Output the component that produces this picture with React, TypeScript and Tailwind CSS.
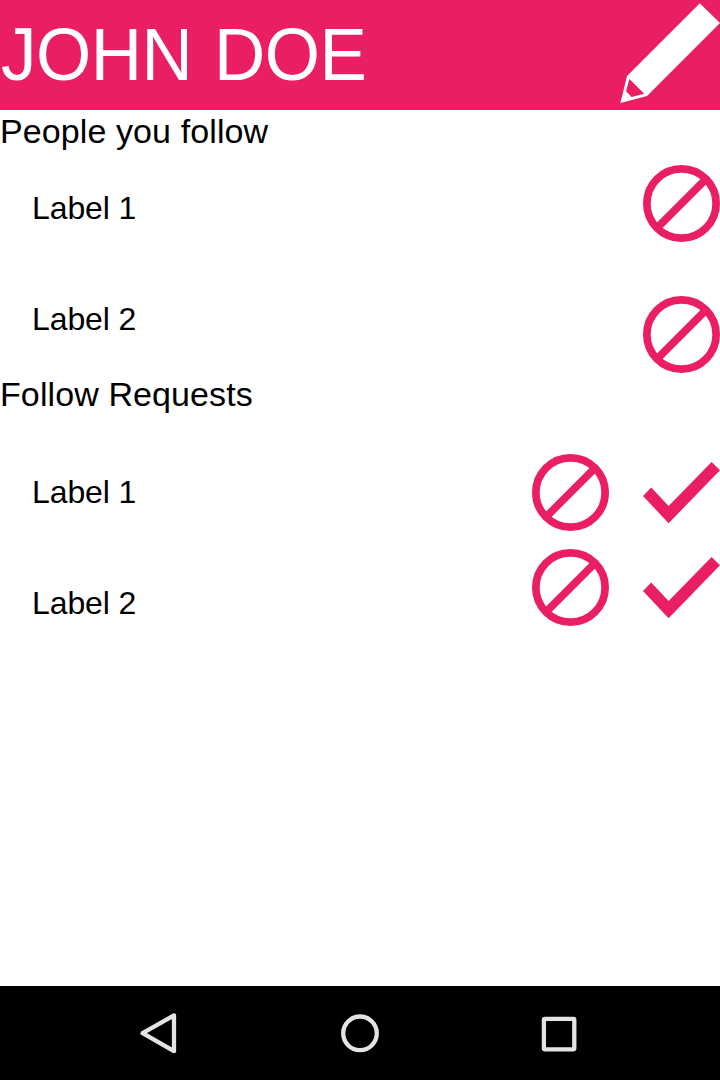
import React from "react";

function Pencil() {
  return (
    <svg viewBox="0 0 100 110" className="h-[110px] w-[100px] shrink-0" fill="white" fillRule="evenodd">
      <path d="M79.8 3.2 100 22.9 27 96 .4 102.9 7 76ZM9.4 79 6 91.3 11.6 97 24.3 93.7Z" />
    </svg>
  );
}

function Block() {
  return (
    <svg viewBox="0 0 77 77" className="h-[77px] w-[77px] shrink-0" fill="none" stroke="#ea1e63" strokeWidth="7.7">
      <circle cx="38.5" cy="38.5" r="34.65" />
      <path d="M14.5 62.5 62.5 14.5" />
    </svg>
  );
}

function Check() {
  return (
    <svg viewBox="0 0 77 77" className="h-[77px] w-[77px] shrink-0" fill="#ea1e63">
      <path d="M0 42 8.2 33.6 25.6 52 68.6 8 77 16.3 25.6 69.2Z" />
    </svg>
  );
}

function Heading({ children }: { children: string }) {
  return (
    <h2 className="h-11 whitespace-nowrap text-[34px] leading-[43px] tracking-[0.1px]">{children}</h2>
  );
}

function Labels({ className }: { className: string }) {
  return (
    <ul className={className}>
      {["Label 1", "Label 2"].map((label) => (
        <li key={label} className="h-[111px] text-[32px] leading-[112px] tracking-[-0.1px]">
          {label}
        </li>
      ))}
    </ul>
  );
}

export default function App() {
  return (
    <div className="flex h-[1080px] w-[720px] flex-col overflow-hidden bg-white font-['Liberation_Sans',Arial,sans-serif] text-black">
      <header className="flex h-[110px] shrink-0 items-center justify-between bg-[#ea1e63]">
        <h1 className="scale-y-[1.05] whitespace-nowrap pl-px text-[71px] leading-[106px] text-white [word-spacing:2.5px] tracking-[-0.5px]">JOHN DOE</h1>
        <Pencil />
      </header>

      <main className="flex-1">
        <section className="h-[263px]">
          <Heading>People you follow</Heading>
          <div className="flex items-start justify-between">
            <Labels className="-mt-0.5 pl-8" />
            <div className="flex flex-col gap-[54px] pt-[11px]">
              <Block />
              <Block />
            </div>
          </div>
        </section>
        <section>
          <Heading>Follow Requests</Heading>
          <div className="flex items-start justify-between">
            <Labels className="pl-8 pt-[19px]" />
            <div className="grid grid-cols-2 gap-x-[34px] gap-y-[18px] pt-[37px]">
              <Block />
              <Check />
              <Block />
              <Check />
            </div>
          </div>
        </section>
      </main>

      <nav className="flex h-[94px] shrink-0 items-center justify-between bg-black px-[137px]">
        <svg viewBox="0 0 44 44" className="h-11 w-11" fill="none" stroke="#e4e4e4" strokeWidth="4.3" strokeLinejoin="round">
          <path d="M5.6 22.2 37 4.4V40.2Z" />
        </svg>
        <svg viewBox="0 0 44 44" className="h-11 w-11" fill="none" stroke="#e4e4e4" strokeWidth="4.3">
          <circle cx="22" cy="22.3" r="16.8" />
        </svg>
        <svg viewBox="0 0 44 44" className="h-11 w-11" fill="none" stroke="#e4e4e4" strokeWidth="4.3">
          <rect x="4.9" y="7.9" width="30.4" height="30.4" rx="1" strokeLinejoin="round" />
        </svg>
      </nav>
    </div>
  );
}
